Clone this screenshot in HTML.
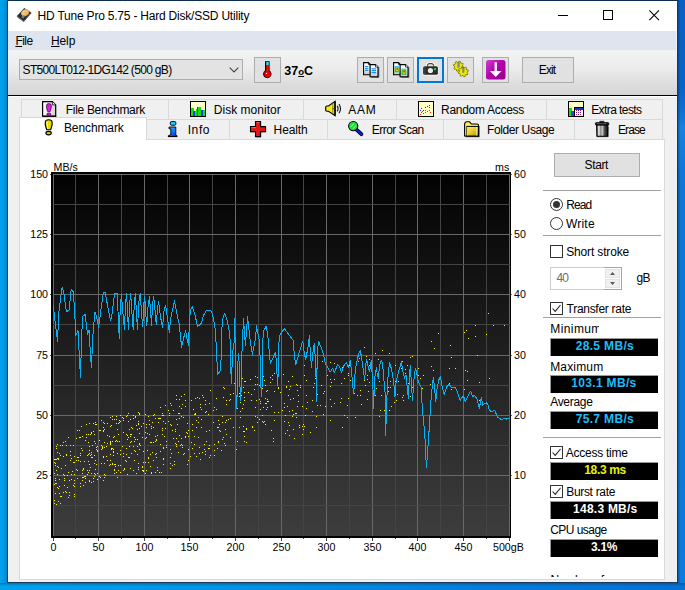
<!DOCTYPE html>
<html>
<head>
<meta charset="utf-8">
<title>HD Tune Pro 5.75 - Hard Disk/SSD Utility</title>
<style>
*{box-sizing:border-box;margin:0;padding:0}
html,body{width:685px;height:590px;overflow:hidden}
body{font-family:"Liberation Sans",sans-serif;font-size:12px;color:#000;position:relative;
 background:linear-gradient(90deg,#00a2ec 0px,#009ae6 4px,#0a80cc 7px,#0a78d0 340px,#0560c4 677px,#0468cd 685px);}
.abs{position:absolute}
.t{position:absolute;white-space:nowrap;line-height:12px;font-size:12px}
.ax{font-size:10.67px;line-height:11px;color:#000}
#win{position:absolute;left:7px;top:0;width:671px;height:583px;background:#f0f0f0;border:1px solid #1a3b5e;border-top-color:#0b2d52}
#title{position:absolute;left:8px;top:1px;width:669px;height:30px;background:#fff}
#menu{position:absolute;left:8px;top:31px;width:668px;height:19px;background:#dfe5ee}
#tool{position:absolute;left:8px;top:50px;width:669px;height:45px;background:linear-gradient(#f3f3f3,#ececec 40%,#d4d4d4)}
#toolline{position:absolute;left:8px;top:95px;width:669px;height:2px;background:#fff;border-top:1px solid #000}
.btn{position:absolute;top:57px;height:26px;width:27px;background:#e1e1e1;border:1px solid #adadad}
.tab{position:absolute;background:#f0f0f0;border-left:1px solid #d9d9d9;border-top:1px solid #d9d9d9}
#pane{position:absolute;left:19px;top:139px;width:646px;height:441px;background:#fff;border:1px solid #d9d9d9}
.val{position:absolute;left:550px;width:108px;height:18px;background:#000;border-left:1px solid #9a9a9a;border-top:1px solid #9a9a9a;color:#1ebcfa;font-weight:bold;text-align:center;font-size:12px;line-height:15px;white-space:nowrap}
.sep{position:absolute;left:543px;width:118px;height:1px;background:#a0a0a0}
.cb{position:absolute;left:550px;width:13px;height:13px;border:1px solid #333;background:#fff}
.rd{position:absolute;left:550px;width:13px;height:13px;border:1px solid #333;background:#fff;border-radius:50%}
.ic{position:absolute;width:16px;height:16px;overflow:visible}
</style>
</head>
<body>
<div id="win"></div>
<div id="title"></div>
<div id="menu"></div>
<div id="tool"></div>
<div id="toolline"></div>

<!-- title icon -->
<svg class="ic" style="left:16px;top:7px" viewBox="0 0 16 16"><defs><radialGradient id="dg" cx="0.45" cy="0.45" r="0.6"><stop offset="0" stop-color="#fde8b0"/><stop offset="0.55" stop-color="#f4bc60"/><stop offset="1" stop-color="#e09030"/></radialGradient></defs><path d="M0.900 9.100 L8.300 0.900 L15.200 5.400 L7.700 14.200 Z" fill="#2e2e30"/><path d="M0.900 9.100 L7.700 14.200 L7.700 15.100 L0.900 10Z" fill="#4a4a4a"/><path d="M7.700 14.200 L15.200 5.400 L15.200 6.300 L7.700 15.100Z" fill="#151515"/><ellipse cx="9.100" cy="5.700" rx="4.200" ry="3.300" fill="url(#dg)" transform="rotate(-33 9.100 5.700)"/><ellipse cx="9.100" cy="5.700" rx="1.350" ry="1.100" fill="#b8bcc8" transform="rotate(-33 9.100 5.700)"/><path d="M5.300 10.300 L7.800 7.800 L8.900 8.700 L7.200 11.800Z" fill="#8c8c90" opacity="0.850"/></svg>
<div class="t" id="ttl" style="left:37.6px;top:10px;letter-spacing:-0.21px">HD Tune Pro 5.75 - Hard Disk/SSD Utility</div>
<!-- caption buttons -->
<svg class="abs" style="left:550px;top:1px" width="127" height="30" viewBox="0 0 127 30" shape-rendering="crispEdges"><rect x="8" y="14" width="10" height="1" fill="#000"/><rect x="53.5" y="9.5" width="9" height="9" fill="none" stroke="#000" stroke-width="1"/><g shape-rendering="auto"><path d="M99.300 9.400 L109 19.100 M109 9.400 L99.300 19.100" stroke="#000" stroke-width="1.050" fill="none"/></g></svg>
<!-- menu -->
<div class="t" id="mfile" style="left:15.4px;top:35px;letter-spacing:-0.54px"><u>F</u>ile</div>
<div class="t" id="mhelp" style="left:51.0px;top:35px;letter-spacing:-0.13px"><u>H</u>elp</div>

<!-- toolbar -->
<div class="abs" id="combo" style="left:19px;top:59px;width:224px;height:21px;background:#e3e3e3;border:1px solid #adadad"></div>
<div class="t" id="combotx" style="left:22.6px;top:64px;letter-spacing:-0.68px">ST500LT012-1DG142 (500 gB)</div>
<svg class="abs" style="left:229px;top:67px" width="10" height="6" viewBox="0 0 10 6"><path d="M0.7 0.7 L5 5 L9.3 0.7" fill="none" stroke="#444" stroke-width="1.1"/></svg>
<div class="btn" style="left:254px"></div>
<svg class="abs" style="left:261px;top:60px" width="13" height="19" viewBox="0 0 13 19"><path d="M4 1.200 h4.600 v9.300 a4.200 4.200 0 1 1 -4.600 0z" fill="#000"/><rect x="5.200" y="2" width="2.600" height="3.500" fill="#30d8e8"/><rect x="5.200" y="5.500" width="2.600" height="7" fill="#f01010"/><circle cx="6.500" cy="14" r="3.300" fill="#e80000"/><rect x="4.800" y="12.800" width="1.200" height="1.200" fill="#fff"/></svg>
<div class="t" id="temp" style="left:284.2px;top:65px;font-weight:bold;font-size:12.5px;letter-spacing:0.06px">37<span style="font-size:9.5px;text-decoration:underline">o</span>C</div>

<div class="btn" style="left:357px"></div>
<svg class="abs" style="left:362px;top:61px" width="18" height="17" viewBox="0 0 18 17"><defs><linearGradient id="pp" x1="0" y1="0" x2="0" y2="1"><stop offset="0.400" stop-color="#fff"/><stop offset="1" stop-color="#c4c4c4"/></linearGradient></defs><path d="M1.600 1.600 h4.800 l2 2 v10.200 h-6.800z" fill="url(#pp)" stroke="#000" stroke-width="1.100"/><path d="M6.400 1.600 v2 h2" fill="none" stroke="#000" stroke-width="0.700"/><path d="M9 16.300 h7.800 v-10" fill="none" stroke="#000" stroke-width="1" opacity="0.550"/><path d="M8.100 3.600 h5.400 l2.500 2.500 v9.600 h-7.900z" fill="url(#pp)" stroke="#000" stroke-width="1.100"/><path d="M13.500 3.600 v2.500 h2.500" fill="#fff" stroke="#000" stroke-width="0.700"/><path d="M3 5.600h3.400M3 7.600h3.400M3 9.500h3.400M9.600 7.800h4.600M9.600 9.600h4.600M9.600 11.600h4.600" stroke="#1a8cff" stroke-width="1.200"/></svg>
<div class="btn" style="left:387px"></div>
<svg class="abs" style="left:392px;top:61px" width="18" height="17" viewBox="0 0 18 17"><path d="M1.600 1.600 h4.800 l2 2 v10.200 h-6.800z" fill="url(#pp)" stroke="#000" stroke-width="1.100"/><path d="M6.400 1.600 v2 h2" fill="none" stroke="#000" stroke-width="0.700"/><path d="M9 16.300 h7.800 v-10" fill="none" stroke="#000" stroke-width="1" opacity="0.550"/><path d="M8.100 3.600 h5.400 l2.500 2.500 v9.600 h-7.900z" fill="url(#pp)" stroke="#000" stroke-width="1.100"/><path d="M13.500 3.600 v2.500 h2.500" fill="#fff" stroke="#000" stroke-width="0.700"/><rect x="2.600" y="5" width="5" height="1.300" fill="#30c8f0"/><rect x="2.600" y="6.300" width="5" height="5" fill="#38c038"/><rect x="4" y="7" width="2.400" height="3" fill="#e8d020"/><rect x="4.600" y="7.200" width="1.500" height="1.500" fill="#e02020"/><rect x="9.400" y="7.600" width="5" height="1.300" fill="#30c8f0"/><rect x="9.400" y="8.900" width="5" height="5" fill="#38c038"/><rect x="10.800" y="9.600" width="2.400" height="3" fill="#e8d020"/><rect x="11.400" y="9.800" width="1.500" height="1.500" fill="#e02020"/></svg>
<div class="btn" style="left:417px;border:2px solid #0078d7"></div>
<svg class="abs" style="left:422px;top:62px" width="17" height="14" viewBox="0 0 17 14"><rect x="0.600" y="3.700" width="15.800" height="9.800" rx="2" fill="#fff"/><path d="M5.400 4.500 v-1 q0 -1.800 1.600 -1.800 h3 q1.600 0 1.600 1.800 v1" fill="#e8e8e8" stroke="#fff" stroke-width="2.600"/><path d="M5.400 4.500 v-1 q0 -1.800 1.600 -1.800 h3 q1.600 0 1.600 1.800 v1" fill="#e4e4e4" stroke="#222" stroke-width="1"/><rect x="1.200" y="4.200" width="14.700" height="8.600" rx="1.500" fill="#2b2b2b"/><rect x="1.200" y="5" width="3" height="7" rx="1" fill="#3c3c3c"/><circle cx="8.400" cy="8.500" r="2.600" fill="#ececec"/><rect x="11.900" y="6.100" width="2.100" height="2.100" fill="#18d838"/></svg>
<div class="btn" style="left:447px"></div>
<svg class="abs" style="left:452px;top:60px" width="18" height="18" viewBox="0 0 18 18"><g fill="#ecec08" stroke="#7c7c00" stroke-width="0.900" stroke-linejoin="round"><path d="M10.40 6.20 L11.56 6.80 L11.21 8.15 L9.90 8.11 L9.26 8.96 L9.66 10.21 L8.45 10.91 L7.56 9.95 L6.50 10.10 L5.90 11.26 L4.55 10.91 L4.59 9.60 L3.74 8.96 L2.49 9.36 L1.79 8.15 L2.75 7.26 L2.60 6.20 L1.44 5.60 L1.79 4.25 L3.10 4.29 L3.74 3.44 L3.34 2.19 L4.55 1.49 L5.44 2.45 L6.50 2.30 L7.10 1.14 L8.45 1.49 L8.41 2.80 L9.26 3.44 L10.51 3.04 L11.21 4.25 L10.25 5.14Z"/><path d="M15.03 12.85 L15.96 13.77 L15.22 14.96 L13.99 14.53 L13.12 15.15 L13.13 16.46 L11.77 16.78 L11.20 15.60 L10.15 15.43 L9.23 16.36 L8.04 15.62 L8.47 14.39 L7.85 13.52 L6.54 13.53 L6.22 12.17 L7.40 11.60 L7.57 10.55 L6.64 9.63 L7.38 8.44 L8.61 8.87 L9.48 8.25 L9.47 6.94 L10.83 6.62 L11.40 7.80 L12.45 7.97 L13.37 7.04 L14.56 7.78 L14.13 9.01 L14.75 9.88 L16.06 9.87 L16.38 11.23 L15.20 11.80Z"/></g><rect x="5.800" y="2.400" width="1.500" height="4.800" fill="#8088a0" stroke="#50586a" stroke-width="0.300"/><rect x="10.600" y="7.800" width="1.500" height="4.800" fill="#8088a0" stroke="#50586a" stroke-width="0.300"/></svg>
<div class="btn" style="left:482px"></div>
<svg class="abs" style="left:486px;top:60px" width="20" height="20" viewBox="0 0 20 20"><defs><linearGradient id="pu" x1="0" y1="0" x2="1" y2="1"><stop offset="0" stop-color="#d040d0"/><stop offset="0.5" stop-color="#b000a8"/><stop offset="1" stop-color="#98008c"/></linearGradient></defs><rect x="0" y="0" width="19.500" height="19.500" rx="2.500" fill="url(#pu)"/><path d="M8.600 2.300 h2.300 v8.700 h4.700 l-5.850 6 l-5.850 -6 h4.700z" fill="#fff"/></svg>
<div class="btn" style="left:522px;width:52px"></div>
<div class="t" id="exit" style="left:538.8px;top:64px;font-size:12px;letter-spacing:-0.90px">Exit</div>

<!-- tabs: upper row -->
<div class="abs" style="left:21px;top:99px;width:642px;height:21px;background:#f0f0f0;border:1px solid #d9d9d9;border-bottom:none"></div>
<div class="abs" style="left:168px;top:100px;width:1px;height:19px;background:#d9d9d9"></div>
<div class="abs" style="left:303px;top:100px;width:1px;height:19px;background:#d9d9d9"></div>
<div class="abs" style="left:396px;top:100px;width:1px;height:19px;background:#d9d9d9"></div>
<div class="abs" style="left:546px;top:100px;width:1px;height:19px;background:#d9d9d9"></div>
<!-- lower row -->
<div class="abs" style="left:21px;top:119px;width:642px;height:21px;background:#f0f0f0;border:1px solid #d9d9d9;border-bottom:none"></div>
<div class="abs" style="left:229px;top:120px;width:1px;height:19px;background:#d9d9d9"></div>
<div class="abs" style="left:327px;top:120px;width:1px;height:19px;background:#d9d9d9"></div>
<div class="abs" style="left:443px;top:120px;width:1px;height:19px;background:#d9d9d9"></div>
<div class="abs" style="left:574px;top:120px;width:1px;height:19px;background:#d9d9d9"></div>
<div id="pane"></div>
<!-- selected tab -->
<div class="abs" style="left:19px;top:117px;width:128px;height:23px;background:#fff;border:1px solid #d9d9d9;border-bottom:none"></div>

<!-- tab icons -->
<!-- file benchmark -->
<svg class="ic" style="left:42px;top:101px" viewBox="0 0 16 16"><defs><linearGradient id="pgf" x1="0" y1="0" x2="1" y2="0"><stop offset="0" stop-color="#fff"/><stop offset="1" stop-color="#d0d0d0"/></linearGradient></defs><path d="M0.600 0.600 h9.800 l3.300 3.300 v11.200 h-13.100z" fill="url(#pgf)" stroke="#000" stroke-width="1.200"/><path d="M0.300 15.300 h13.900" stroke="#000" stroke-width="1"/><path d="M10.400 0.800 v3.100 h3.100" fill="#fff" stroke="#000" stroke-width="0.800"/><path d="M4.400 5 Q4.400 2.600 6.900 2.600 Q9.400 2.600 9.400 5 Q9.400 7.500 8.100 10.600 L5.700 10.600 Q4.400 7.500 4.400 5 Z" fill="#e818e8" stroke="#300030" stroke-width="0.700"/><ellipse cx="6.900" cy="13.200" rx="2" ry="1.200" fill="#e818e8" stroke="#300030" stroke-width="0.700"/></svg>
<div class="t" id="tfb" style="left:65.8px;top:104px;letter-spacing:-0.31px">File Benchmark</div>
<!-- disk monitor -->
<svg class="ic" style="left:190px;top:101px" viewBox="0 0 16 16" shape-rendering="crispEdges"><rect x="1" y="1" width="15" height="15" fill="#444"/><rect x="0.500" y="0.500" width="14.500" height="14.500" fill="#ffffc8" stroke="#000"/><rect x="1" y="7" width="3" height="8" fill="#10e010"/><rect x="4" y="10" width="2" height="5" fill="#10e010"/><rect x="6" y="8" width="2" height="7" fill="#10e010"/><rect x="8" y="6" width="3" height="9" fill="#10e010"/><rect x="11" y="9" width="4" height="6" fill="#10e010"/><rect x="3" y="10" width="1.500" height="5" fill="#3030ff"/><rect x="6.500" y="5.500" width="1.500" height="9.500" fill="#3030ff"/><rect x="11" y="9" width="1.500" height="6" fill="#3030ff"/></svg>
<div class="t" id="tdm" style="left:213.8px;top:104px;letter-spacing:0.02px">Disk monitor</div>
<!-- AAM -->
<svg class="ic" style="left:325px;top:101px" viewBox="0 0 16 16"><path d="M0.700 6.200 q0 -1.200 1.200 -1.200 h1.600 l6.600 -4.600 v14.400 l-6.600 -4.600 h-1.600 q-1.200 0 -1.200 -1.200z" fill="#f4ec18" stroke="#000" stroke-width="1.100"/><path d="M10 0.600 v14" stroke="#000" stroke-width="1.400"/><path d="M7.800 2.500 v10.500" stroke="#787000" stroke-width="0.800"/><circle cx="8.200" cy="7.600" r="0.900" fill="#666"/><path d="M12.200 4.800 q1.800 2.800 0 5.600 M14 3 q3 4.600 0 9.200" fill="none" stroke="#111" stroke-width="1.100"/></svg>
<div class="t" id="taam" style="left:348.2px;top:104px;letter-spacing:0.80px">AAM</div>
<!-- random access -->
<svg class="ic" style="left:418px;top:101px" viewBox="0 0 16 16" shape-rendering="crispEdges"><rect x="1" y="1" width="15" height="15" fill="#444"/><rect x="0.500" y="0.500" width="14.500" height="14.500" fill="#ffffc8" stroke="#000"/><g fill="#2020ff"><rect x="3" y="7" width="1" height="1"/><rect x="5" y="9" width="1" height="1"/><rect x="7" y="6" width="1" height="1"/><rect x="9" y="5" width="1" height="1"/><rect x="11" y="4" width="1" height="1"/><rect x="11" y="6" width="1" height="1"/><rect x="2" y="9" width="1" height="1"/></g><g fill="#ff2020"><rect x="2" y="13" width="1" height="1"/><rect x="3" y="11" width="1" height="1"/><rect x="5" y="12" width="1" height="1"/><rect x="7" y="11" width="1" height="1"/><rect x="7" y="9" width="1" height="1"/><rect x="9" y="10" width="1" height="1"/><rect x="11" y="9" width="1" height="1"/><rect x="12" y="11" width="1" height="1"/><rect x="4" y="10" width="1" height="1"/></g></svg>
<div class="t" id="tra" style="left:441.1px;top:104px;letter-spacing:-0.29px">Random Access</div>
<!-- extra tests -->
<svg class="ic" style="left:568px;top:101px" viewBox="0 0 16 16" shape-rendering="crispEdges"><rect x="1" y="1" width="15" height="15" fill="#444"/><rect x="0.500" y="0.500" width="14.500" height="14.500" fill="#ffffc8" stroke="#000"/><rect x="1" y="7" width="3" height="8" fill="#10e010"/><rect x="3" y="10" width="3" height="5" fill="#3838ff"/><rect x="6.500" y="6.500" width="8.500" height="8.500" fill="#fff" stroke="#000"/><rect x="7" y="7" width="8" height="1.500" fill="#2030d0"/><g fill="#f02020"><rect x="8" y="9" width="1" height="1"/><rect x="12" y="9" width="1" height="1"/><rect x="10" y="11" width="1" height="1"/><rect x="8" y="13" width="1" height="1"/><rect x="12" y="13" width="1" height="1"/></g><g fill="#2020f0"><rect x="10" y="9" width="1" height="1"/><rect x="8" y="11" width="1" height="1"/><rect x="12" y="11" width="1" height="1"/><rect x="10" y="13" width="1" height="1"/></g></svg>
<div class="t" id="tet" style="left:591.2px;top:104px;letter-spacing:-0.58px">Extra tests</div>
<!-- benchmark (selected) -->
<svg class="ic" style="left:41px;top:119px" viewBox="0 0 16 16"><path d="M4.300 3.400 Q4.300 0.700 7.700 0.700 Q11.100 0.700 11.100 3.400 L11.100 5.600 Q10.500 8.600 9.600 10.700 L5.800 10.700 Q4.900 8.600 4.300 5.600 Z" fill="#e4dc00" stroke="#000" stroke-width="1.150"/><path d="M6 2.500 Q5.900 5 6.800 9.500" stroke="#ffff90" stroke-width="1" fill="none"/><ellipse cx="7.600" cy="14.100" rx="2.700" ry="1.800" fill="#d4cc00" stroke="#000" stroke-width="1.150"/></svg>
<div class="t" id="tbm" style="left:63.9px;top:122px;letter-spacing:-0.09px">Benchmark</div>
<!-- info -->
<svg class="ic" style="left:165px;top:121px" viewBox="0 0 16 16"><defs><linearGradient id="bl" x1="0" y1="0" x2="0.300" y2="1"><stop offset="0" stop-color="#28b0ff"/><stop offset="1" stop-color="#0048f8"/></linearGradient></defs><rect x="5.300" y="0.500" width="5.600" height="3.800" rx="1.400" fill="#20c0ff" stroke="#000" stroke-width="0.900"/><path d="M4 6 L10.800 6 L10.800 14.600 L12 14.600 L12 15.500 L3.200 15.500 L3.200 14.800 L5.800 13.500 L5.800 7.800 L4 7.800 Z" fill="url(#bl)" stroke="#000" stroke-width="0.900"/><path d="M3 15.600 h9.300" stroke="#000" stroke-width="1"/></svg>
<div class="t" id="tin" style="left:187.7px;top:124px;letter-spacing:0.60px">Info</div>
<!-- health -->
<svg class="ic" style="left:250px;top:121px" viewBox="0 0 16 16"><path d="M6.200 1.200 h5 v5 h5 v5 h-5 v5 h-5 v-5 h-5 v-5 h5z" fill="#000" opacity="0.550"/><path d="M5.500 0.600 h5 v5 h5 v5 h-5 v5 h-5 v-5 h-5 v-5 h5z" fill="#e41818" stroke="#000" stroke-width="1.100"/><path d="M6.500 1.600 h3 M1.500 6.600 h4.500" stroke="#ff7070" stroke-width="0.900"/></svg>
<div class="t" id="the" style="left:273.6px;top:124px;letter-spacing:-0.12px">Health</div>
<!-- error scan -->
<svg class="ic" style="left:347px;top:121px" viewBox="0 0 17 17"><path d="M9.800 8.800 L15.300 14" stroke="#000" stroke-width="4" stroke-linecap="round"/><path d="M9.800 8.800 L15.300 14" stroke="#1420d0" stroke-width="2.300" stroke-linecap="round"/><circle cx="6.600" cy="5.400" r="4.900" fill="#28dc40" stroke="#000" stroke-width="1.100"/><path d="M4 6.200 L7.200 3.200 M6.600 8 L9 5.600" stroke="#d8ffd8" stroke-width="0.900"/></svg>
<div class="t" id="tes" style="left:371.8px;top:124px;letter-spacing:-0.54px">Error Scan</div>
<!-- folder usage -->
<svg class="ic" style="left:464px;top:121px" viewBox="0 0 16 16"><defs><linearGradient id="fo" x1="0" y1="0" x2="1" y2="1"><stop offset="0" stop-color="#fff080"/><stop offset="0.500" stop-color="#e8c828"/><stop offset="1" stop-color="#b88c00"/></linearGradient></defs><path d="M1.300 15.600 h13.800 v-10.500" stroke="#000" stroke-width="1.200" fill="none" opacity="0.600"/><path d="M0.600 3.600 q0 -2.800 2.200 -2.800 h2.700 l2 2.200 h5.600 q1.400 0 1.400 1.400 v10.600 h-13.900z" fill="#fcf060" stroke="#000" stroke-width="1.100"/><rect x="2.900" y="5.400" width="11.600" height="9.600" fill="url(#fo)" stroke="#000" stroke-width="1"/><path d="M12.400 6 v8.500" stroke="#fff4b0" stroke-width="0.700"/><path d="M3.500 6 v8.500" stroke="#fffbd0" stroke-width="0.700"/></svg>
<div class="t" id="tfu" style="left:487.0px;top:124px;letter-spacing:-0.39px">Folder Usage</div>
<!-- erase -->
<svg class="ic" style="left:594px;top:121px" viewBox="0 0 16 16"><defs><linearGradient id="tr" x1="0" y1="0" x2="1" y2="0"><stop offset="0" stop-color="#303030"/><stop offset="0.200" stop-color="#f0f0f0"/><stop offset="0.380" stop-color="#808080"/><stop offset="0.500" stop-color="#d0d0d0"/><stop offset="0.700" stop-color="#505050"/><stop offset="1" stop-color="#0a0a0a"/></linearGradient></defs><path d="M2.600 3.600 h11.200 l-0.300 11.700 h-10.600z" fill="url(#tr)" stroke="#000" stroke-width="1.100"/><path d="M3 15.700 h11.300 v-10" stroke="#000" stroke-width="0.900" fill="none" opacity="0.600"/><rect x="1.400" y="1.600" width="13.400" height="2.500" rx="0.900" fill="#1c1c1c" stroke="#000" stroke-width="0.800"/><path d="M3 2.300 h9" stroke="#8a8a8a" stroke-width="0.700"/><rect x="5.600" y="0.300" width="4.600" height="1.500" rx="0.500" fill="#222" stroke="#000" stroke-width="0.600"/></svg>
<div class="t" id="ter" style="left:618.0px;top:124px;letter-spacing:-0.90px">Erase</div>


<svg class="abs" style="left:0;top:0" width="685" height="590" viewBox="0 0 685 590" shape-rendering="crispEdges">
<defs><linearGradient id="pg" x1="0" y1="0" x2="0" y2="1"><stop offset="0" stop-color="#020202"/><stop offset="1" stop-color="#3d3d3d"/></linearGradient></defs>
<rect x="51" y="172" width="460" height="366" fill="#000"/>
<rect x="53" y="174" width="457" height="362" fill="url(#pg)"/>
<rect x="53" y="174" width="1" height="362" fill="#686868"/>
<rect x="75" y="174" width="1" height="362" fill="#444444"/>
<rect x="98" y="174" width="1" height="362" fill="#686868"/>
<rect x="121" y="174" width="1" height="362" fill="#444444"/>
<rect x="144" y="174" width="1" height="362" fill="#686868"/>
<rect x="167" y="174" width="1" height="362" fill="#444444"/>
<rect x="189" y="174" width="1" height="362" fill="#686868"/>
<rect x="212" y="174" width="1" height="362" fill="#444444"/>
<rect x="235" y="174" width="1" height="362" fill="#686868"/>
<rect x="258" y="174" width="1" height="362" fill="#444444"/>
<rect x="281" y="174" width="1" height="362" fill="#686868"/>
<rect x="303" y="174" width="1" height="362" fill="#444444"/>
<rect x="326" y="174" width="1" height="362" fill="#686868"/>
<rect x="349" y="174" width="1" height="362" fill="#444444"/>
<rect x="372" y="174" width="1" height="362" fill="#686868"/>
<rect x="395" y="174" width="1" height="362" fill="#444444"/>
<rect x="417" y="174" width="1" height="362" fill="#686868"/>
<rect x="440" y="174" width="1" height="362" fill="#444444"/>
<rect x="463" y="174" width="1" height="362" fill="#686868"/>
<rect x="486" y="174" width="1" height="362" fill="#444444"/>
<rect x="509" y="174" width="1" height="362" fill="#686868"/>
<rect x="53" y="174" width="457" height="1" fill="#686868"/>
<rect x="53" y="204" width="457" height="1" fill="#444444"/>
<rect x="53" y="234" width="457" height="1" fill="#686868"/>
<rect x="53" y="264" width="457" height="1" fill="#444444"/>
<rect x="53" y="294" width="457" height="1" fill="#686868"/>
<rect x="53" y="324" width="457" height="1" fill="#444444"/>
<rect x="53" y="355" width="457" height="1" fill="#686868"/>
<rect x="53" y="385" width="457" height="1" fill="#444444"/>
<rect x="53" y="415" width="457" height="1" fill="#686868"/>
<rect x="53" y="445" width="457" height="1" fill="#444444"/>
<rect x="53" y="475" width="457" height="1" fill="#686868"/>
<rect x="53" y="505" width="457" height="1" fill="#444444"/>

<rect x="50" y="174" width="1" height="1" fill="#555"/>
<rect x="511" y="174" width="1" height="1" fill="#666"/>
<rect x="50" y="234" width="1" height="1" fill="#555"/>
<rect x="511" y="234" width="1" height="1" fill="#666"/>
<rect x="50" y="294" width="1" height="1" fill="#555"/>
<rect x="511" y="294" width="1" height="1" fill="#666"/>
<rect x="50" y="355" width="1" height="1" fill="#555"/>
<rect x="511" y="355" width="1" height="1" fill="#666"/>
<rect x="50" y="415" width="1" height="1" fill="#555"/>
<rect x="511" y="415" width="1" height="1" fill="#666"/>
<rect x="50" y="475" width="1" height="1" fill="#555"/>
<rect x="511" y="475" width="1" height="1" fill="#666"/>
<rect x="53" y="538" width="1" height="3" fill="#444"/>
<rect x="75" y="538" width="1" height="1" fill="#444"/>
<rect x="98" y="538" width="1" height="3" fill="#444"/>
<rect x="121" y="538" width="1" height="1" fill="#444"/>
<rect x="144" y="538" width="1" height="3" fill="#444"/>
<rect x="167" y="538" width="1" height="1" fill="#444"/>
<rect x="189" y="538" width="1" height="3" fill="#444"/>
<rect x="212" y="538" width="1" height="1" fill="#444"/>
<rect x="235" y="538" width="1" height="3" fill="#444"/>
<rect x="258" y="538" width="1" height="1" fill="#444"/>
<rect x="281" y="538" width="1" height="3" fill="#444"/>
<rect x="303" y="538" width="1" height="1" fill="#444"/>
<rect x="326" y="538" width="1" height="3" fill="#444"/>
<rect x="349" y="538" width="1" height="1" fill="#444"/>
<rect x="372" y="538" width="1" height="3" fill="#444"/>
<rect x="395" y="538" width="1" height="1" fill="#444"/>
<rect x="417" y="538" width="1" height="3" fill="#444"/>
<rect x="440" y="538" width="1" height="1" fill="#444"/>
<rect x="463" y="538" width="1" height="3" fill="#444"/>
<rect x="486" y="538" width="1" height="1" fill="#444"/>
<rect x="509" y="538" width="1" height="3" fill="#444"/>
<path d="M63 474h1v1h-1zM73 462h1v1h-1zM64 475h1v1h-1zM57 474h1v1h-1zM67 487h1v1h-1zM55 463h1v1h-1zM55 493h1v1h-1zM68 437h1v1h-1zM74 494h1v1h-1zM67 475h1v1h-1zM57 444h1v1h-1zM65 441h1v1h-1zM57 458h1v1h-1zM54 473h1v1h-1zM63 492h1v1h-1zM64 478h1v1h-1zM64 480h1v1h-1zM63 456h1v1h-1zM74 496h1v1h-1zM71 479h1v1h-1zM60 455h1v1h-1zM60 445h1v1h-1zM70 460h1v1h-1zM71 458h1v1h-1zM74 486h1v1h-1zM54 459h1v1h-1zM73 462h1v1h-1zM74 456h1v1h-1zM55 483h1v1h-1zM70 451h1v1h-1zM55 465h1v1h-1zM74 480h1v1h-1zM56 459h1v1h-1zM56 448h1v1h-1zM70 445h1v1h-1zM65 465h1v1h-1zM58 488h1v1h-1zM56 483h1v1h-1zM56 470h1v1h-1zM58 459h1v1h-1zM74 483h1v1h-1zM60 496h1v1h-1zM58 467h1v1h-1zM71 474h1v1h-1zM56 504h1v1h-1zM58 458h1v1h-1zM70 455h1v1h-1zM60 445h1v1h-1zM55 480h1v1h-1zM59 479h1v1h-1zM61 468h1v1h-1zM74 462h1v1h-1zM66 492h1v1h-1zM57 452h1v1h-1zM73 485h1v1h-1zM59 453h1v1h-1zM69 495h1v1h-1zM58 501h1v1h-1zM72 471h1v1h-1zM62 445h1v1h-1zM54 503h1v1h-1zM59 486h1v1h-1zM59 493h1v1h-1zM66 455h1v1h-1zM57 487h1v1h-1zM55 459h1v1h-1zM65 491h1v1h-1zM66 454h1v1h-1zM73 445h1v1h-1zM54 462h1v1h-1zM63 442h1v1h-1zM57 466h1v1h-1zM66 445h1v1h-1zM61 496h1v1h-1zM74 474h1v1h-1zM68 472h1v1h-1zM56 446h1v1h-1zM54 500h1v1h-1zM68 497h1v1h-1zM54 484h1v1h-1zM64 485h1v1h-1zM60 503h1v1h-1zM55 478h1v1h-1zM69 492h1v1h-1zM69 480h1v1h-1zM93 478h1v1h-1zM83 469h1v1h-1zM95 474h1v1h-1zM85 476h1v1h-1zM94 455h1v1h-1zM89 446h1v1h-1zM88 461h1v1h-1zM77 470h1v1h-1zM97 473h1v1h-1zM92 445h1v1h-1zM92 457h1v1h-1zM85 478h1v1h-1zM77 478h1v1h-1zM76 469h1v1h-1zM86 437h1v1h-1zM91 452h1v1h-1zM89 481h1v1h-1zM81 426h1v1h-1zM82 470h1v1h-1zM80 437h1v1h-1zM95 460h1v1h-1zM85 482h1v1h-1zM83 468h1v1h-1zM80 455h1v1h-1zM93 478h1v1h-1zM95 443h1v1h-1zM88 442h1v1h-1zM78 460h1v1h-1zM94 473h1v1h-1zM91 482h1v1h-1zM82 436h1v1h-1zM85 440h1v1h-1zM80 453h1v1h-1zM89 453h1v1h-1zM82 480h1v1h-1zM97 446h1v1h-1zM77 430h1v1h-1zM95 422h1v1h-1zM91 457h1v1h-1zM82 477h1v1h-1zM76 438h1v1h-1zM86 424h1v1h-1zM94 434h1v1h-1zM79 430h1v1h-1zM89 450h1v1h-1zM89 464h1v1h-1zM93 481h1v1h-1zM91 433h1v1h-1zM86 434h1v1h-1zM76 460h1v1h-1zM91 432h1v1h-1zM81 448h1v1h-1zM91 454h1v1h-1zM89 470h1v1h-1zM84 476h1v1h-1zM95 424h1v1h-1zM96 464h1v1h-1zM78 457h1v1h-1zM89 480h1v1h-1zM84 461h1v1h-1zM95 469h1v1h-1zM96 447h1v1h-1zM90 434h1v1h-1zM91 473h1v1h-1zM90 467h1v1h-1zM80 486h1v1h-1zM97 479h1v1h-1zM87 474h1v1h-1zM83 485h1v1h-1zM94 441h1v1h-1zM77 457h1v1h-1zM88 472h1v1h-1zM86 424h1v1h-1zM93 423h1v1h-1zM93 431h1v1h-1zM83 477h1v1h-1zM79 437h1v1h-1zM87 470h1v1h-1zM94 463h1v1h-1zM96 449h1v1h-1zM96 424h1v1h-1zM80 461h1v1h-1zM82 473h1v1h-1zM90 455h1v1h-1zM94 455h1v1h-1zM82 450h1v1h-1zM94 476h1v1h-1zM80 483h1v1h-1zM97 451h1v1h-1zM88 434h1v1h-1zM87 455h1v1h-1zM89 423h1v1h-1zM97 450h1v1h-1zM84 476h1v1h-1zM88 454h1v1h-1zM114 419h1v1h-1zM110 442h1v1h-1zM120 472h1v1h-1zM104 447h1v1h-1zM101 445h1v1h-1zM116 472h1v1h-1zM109 436h1v1h-1zM103 456h1v1h-1zM119 422h1v1h-1zM116 416h1v1h-1zM103 431h1v1h-1zM114 436h1v1h-1zM106 456h1v1h-1zM101 463h1v1h-1zM101 449h1v1h-1zM104 429h1v1h-1zM110 444h1v1h-1zM107 443h1v1h-1zM110 426h1v1h-1zM103 457h1v1h-1zM113 449h1v1h-1zM117 453h1v1h-1zM117 429h1v1h-1zM115 466h1v1h-1zM118 434h1v1h-1zM105 475h1v1h-1zM103 480h1v1h-1zM118 423h1v1h-1zM104 463h1v1h-1zM104 423h1v1h-1zM117 441h1v1h-1zM116 423h1v1h-1zM107 460h1v1h-1zM99 430h1v1h-1zM114 473h1v1h-1zM120 421h1v1h-1zM110 464h1v1h-1zM110 460h1v1h-1zM103 422h1v1h-1zM101 420h1v1h-1zM111 449h1v1h-1zM111 425h1v1h-1zM103 430h1v1h-1zM117 477h1v1h-1zM119 420h1v1h-1zM100 477h1v1h-1zM109 465h1v1h-1zM106 446h1v1h-1zM110 443h1v1h-1zM112 416h1v1h-1zM114 469h1v1h-1zM102 446h1v1h-1zM115 441h1v1h-1zM103 427h1v1h-1zM110 417h1v1h-1zM118 465h1v1h-1zM114 470h1v1h-1zM112 441h1v1h-1zM112 448h1v1h-1zM120 465h1v1h-1zM104 474h1v1h-1zM115 464h1v1h-1zM116 440h1v1h-1zM118 470h1v1h-1zM114 464h1v1h-1zM115 441h1v1h-1zM114 419h1v1h-1zM106 446h1v1h-1zM99 440h1v1h-1zM113 455h1v1h-1zM104 477h1v1h-1zM113 437h1v1h-1zM113 452h1v1h-1zM110 441h1v1h-1zM120 454h1v1h-1zM114 464h1v1h-1zM120 415h1v1h-1zM112 463h1v1h-1zM104 442h1v1h-1zM100 430h1v1h-1zM107 423h1v1h-1zM104 474h1v1h-1zM111 448h1v1h-1zM120 450h1v1h-1zM120 454h1v1h-1zM116 419h1v1h-1zM112 464h1v1h-1zM99 476h1v1h-1zM102 447h1v1h-1zM102 448h1v1h-1zM112 419h1v1h-1zM119 441h1v1h-1zM110 454h1v1h-1zM107 435h1v1h-1zM113 451h1v1h-1zM128 457h1v1h-1zM128 413h1v1h-1zM127 415h1v1h-1zM125 460h1v1h-1zM130 468h1v1h-1zM138 412h1v1h-1zM143 470h1v1h-1zM123 470h1v1h-1zM131 441h1v1h-1zM143 423h1v1h-1zM133 470h1v1h-1zM137 439h1v1h-1zM143 462h1v1h-1zM135 417h1v1h-1zM135 439h1v1h-1zM126 416h1v1h-1zM133 418h1v1h-1zM131 453h1v1h-1zM132 428h1v1h-1zM134 437h1v1h-1zM139 443h1v1h-1zM143 471h1v1h-1zM138 424h1v1h-1zM124 469h1v1h-1zM139 449h1v1h-1zM129 429h1v1h-1zM137 446h1v1h-1zM135 451h1v1h-1zM138 421h1v1h-1zM127 474h1v1h-1zM142 466h1v1h-1zM122 417h1v1h-1zM127 439h1v1h-1zM135 416h1v1h-1zM133 415h1v1h-1zM123 456h1v1h-1zM134 450h1v1h-1zM130 442h1v1h-1zM126 434h1v1h-1zM138 463h1v1h-1zM123 420h1v1h-1zM139 449h1v1h-1zM138 423h1v1h-1zM131 427h1v1h-1zM139 433h1v1h-1zM136 473h1v1h-1zM129 446h1v1h-1zM138 469h1v1h-1zM131 434h1v1h-1zM124 468h1v1h-1zM123 418h1v1h-1zM134 441h1v1h-1zM137 429h1v1h-1zM139 414h1v1h-1zM126 454h1v1h-1zM123 432h1v1h-1zM137 454h1v1h-1zM128 421h1v1h-1zM129 457h1v1h-1zM130 419h1v1h-1zM137 446h1v1h-1zM142 470h1v1h-1zM142 437h1v1h-1zM139 428h1v1h-1zM128 437h1v1h-1zM142 467h1v1h-1zM127 435h1v1h-1zM130 434h1v1h-1zM130 436h1v1h-1zM126 448h1v1h-1zM139 444h1v1h-1zM140 445h1v1h-1zM125 460h1v1h-1zM141 426h1v1h-1zM122 446h1v1h-1zM133 446h1v1h-1zM143 451h1v1h-1zM139 413h1v1h-1zM134 460h1v1h-1zM123 418h1v1h-1zM138 467h1v1h-1zM123 453h1v1h-1zM125 460h1v1h-1zM136 425h1v1h-1zM126 461h1v1h-1zM156 457h1v1h-1zM153 427h1v1h-1zM166 447h1v1h-1zM155 441h1v1h-1zM160 451h1v1h-1zM165 428h1v1h-1zM163 448h1v1h-1zM163 458h1v1h-1zM163 464h1v1h-1zM166 445h1v1h-1zM156 453h1v1h-1zM162 430h1v1h-1zM154 414h1v1h-1zM161 472h1v1h-1zM153 415h1v1h-1zM149 434h1v1h-1zM151 472h1v1h-1zM146 427h1v1h-1zM147 450h1v1h-1zM162 413h1v1h-1zM146 437h1v1h-1zM157 467h1v1h-1zM145 414h1v1h-1zM149 420h1v1h-1zM150 454h1v1h-1zM158 418h1v1h-1zM149 424h1v1h-1zM148 457h1v1h-1zM151 442h1v1h-1zM162 434h1v1h-1zM150 466h1v1h-1zM165 423h1v1h-1zM157 470h1v1h-1zM155 418h1v1h-1zM146 470h1v1h-1zM162 428h1v1h-1zM156 439h1v1h-1zM151 473h1v1h-1zM159 418h1v1h-1zM145 438h1v1h-1zM153 460h1v1h-1zM160 444h1v1h-1zM148 416h1v1h-1zM152 422h1v1h-1zM164 436h1v1h-1zM159 472h1v1h-1zM150 442h1v1h-1zM148 458h1v1h-1zM145 462h1v1h-1zM163 459h1v1h-1zM146 424h1v1h-1zM160 407h1v1h-1zM155 436h1v1h-1zM166 441h1v1h-1zM163 421h1v1h-1zM162 430h1v1h-1zM165 405h1v1h-1zM163 415h1v1h-1zM156 440h1v1h-1zM148 462h1v1h-1zM151 426h1v1h-1zM146 427h1v1h-1zM155 454h1v1h-1zM152 452h1v1h-1zM147 433h1v1h-1zM155 472h1v1h-1zM163 447h1v1h-1zM145 432h1v1h-1zM160 418h1v1h-1zM157 435h1v1h-1zM145 473h1v1h-1zM162 415h1v1h-1zM158 422h1v1h-1zM153 442h1v1h-1zM151 428h1v1h-1zM176 444h1v1h-1zM173 410h1v1h-1zM183 417h1v1h-1zM187 433h1v1h-1zM183 417h1v1h-1zM185 400h1v1h-1zM170 403h1v1h-1zM182 445h1v1h-1zM171 425h1v1h-1zM185 436h1v1h-1zM169 413h1v1h-1zM171 405h1v1h-1zM176 399h1v1h-1zM187 423h1v1h-1zM178 441h1v1h-1zM184 453h1v1h-1zM176 419h1v1h-1zM176 395h1v1h-1zM176 446h1v1h-1zM188 449h1v1h-1zM181 438h1v1h-1zM168 421h1v1h-1zM175 443h1v1h-1zM170 424h1v1h-1zM178 452h1v1h-1zM185 437h1v1h-1zM171 453h1v1h-1zM186 432h1v1h-1zM175 431h1v1h-1zM170 449h1v1h-1zM188 430h1v1h-1zM183 454h1v1h-1zM172 465h1v1h-1zM181 408h1v1h-1zM169 415h1v1h-1zM180 445h1v1h-1zM174 464h1v1h-1zM175 429h1v1h-1zM170 468h1v1h-1zM170 463h1v1h-1zM179 435h1v1h-1zM179 413h1v1h-1zM187 464h1v1h-1zM185 436h1v1h-1zM170 457h1v1h-1zM174 461h1v1h-1zM173 438h1v1h-1zM185 406h1v1h-1zM179 399h1v1h-1zM168 410h1v1h-1zM188 460h1v1h-1zM181 416h1v1h-1zM182 447h1v1h-1zM176 438h1v1h-1zM184 394h1v1h-1zM172 430h1v1h-1zM171 425h1v1h-1zM179 406h1v1h-1zM178 413h1v1h-1zM179 418h1v1h-1zM181 396h1v1h-1zM182 404h1v1h-1zM188 436h1v1h-1zM177 424h1v1h-1zM181 444h1v1h-1zM206 441h1v1h-1zM200 459h1v1h-1zM208 448h1v1h-1zM198 422h1v1h-1zM202 452h1v1h-1zM201 427h1v1h-1zM199 453h1v1h-1zM197 397h1v1h-1zM205 451h1v1h-1zM206 431h1v1h-1zM206 411h1v1h-1zM203 397h1v1h-1zM192 424h1v1h-1zM201 419h1v1h-1zM191 442h1v1h-1zM201 409h1v1h-1zM196 420h1v1h-1zM195 398h1v1h-1zM210 455h1v1h-1zM204 449h1v1h-1zM199 447h1v1h-1zM194 444h1v1h-1zM202 452h1v1h-1zM192 448h1v1h-1zM192 430h1v1h-1zM210 390h1v1h-1zM195 413h1v1h-1zM197 397h1v1h-1zM209 445h1v1h-1zM198 417h1v1h-1zM202 395h1v1h-1zM190 456h1v1h-1zM196 427h1v1h-1zM210 455h1v1h-1zM200 407h1v1h-1zM196 456h1v1h-1zM209 403h1v1h-1zM208 414h1v1h-1zM200 404h1v1h-1zM209 457h1v1h-1zM194 436h1v1h-1zM194 453h1v1h-1zM191 400h1v1h-1zM205 412h1v1h-1zM209 448h1v1h-1zM205 400h1v1h-1zM205 454h1v1h-1zM199 398h1v1h-1zM194 414h1v1h-1zM205 404h1v1h-1zM193 409h1v1h-1zM204 444h1v1h-1zM198 437h1v1h-1zM209 430h1v1h-1zM195 414h1v1h-1zM233 427h1v1h-1zM219 430h1v1h-1zM214 455h1v1h-1zM222 422h1v1h-1zM224 388h1v1h-1zM226 404h1v1h-1zM218 442h1v1h-1zM214 407h1v1h-1zM229 400h1v1h-1zM219 424h1v1h-1zM217 448h1v1h-1zM234 383h1v1h-1zM223 437h1v1h-1zM221 450h1v1h-1zM223 397h1v1h-1zM225 429h1v1h-1zM220 431h1v1h-1zM230 418h1v1h-1zM224 443h1v1h-1zM228 419h1v1h-1zM233 393h1v1h-1zM230 394h1v1h-1zM226 400h1v1h-1zM222 439h1v1h-1zM230 437h1v1h-1zM218 420h1v1h-1zM217 427h1v1h-1zM223 387h1v1h-1zM226 434h1v1h-1zM225 445h1v1h-1zM216 398h1v1h-1zM213 422h1v1h-1zM222 416h1v1h-1zM218 441h1v1h-1zM214 450h1v1h-1zM225 422h1v1h-1zM230 399h1v1h-1zM216 409h1v1h-1zM213 410h1v1h-1zM226 420h1v1h-1zM218 427h1v1h-1zM214 444h1v1h-1zM239 396h1v1h-1zM239 427h1v1h-1zM254 430h1v1h-1zM237 408h1v1h-1zM244 392h1v1h-1zM257 377h1v1h-1zM246 429h1v1h-1zM257 384h1v1h-1zM246 428h1v1h-1zM236 396h1v1h-1zM255 384h1v1h-1zM244 397h1v1h-1zM245 381h1v1h-1zM236 449h1v1h-1zM252 427h1v1h-1zM241 395h1v1h-1zM248 392h1v1h-1zM246 442h1v1h-1zM244 400h1v1h-1zM257 417h1v1h-1zM236 408h1v1h-1zM250 379h1v1h-1zM243 426h1v1h-1zM255 416h1v1h-1zM255 407h1v1h-1zM244 436h1v1h-1zM244 431h1v1h-1zM240 402h1v1h-1zM240 417h1v1h-1zM239 393h1v1h-1zM240 411h1v1h-1zM242 408h1v1h-1zM257 422h1v1h-1zM254 389h1v1h-1zM244 381h1v1h-1zM251 400h1v1h-1zM242 378h1v1h-1zM240 397h1v1h-1zM244 441h1v1h-1zM251 394h1v1h-1zM243 387h1v1h-1zM256 400h1v1h-1zM252 426h1v1h-1zM255 376h1v1h-1zM243 404h1v1h-1zM237 441h1v1h-1zM243 431h1v1h-1zM270 377h1v1h-1zM267 390h1v1h-1zM259 385h1v1h-1zM272 375h1v1h-1zM265 403h1v1h-1zM270 382h1v1h-1zM274 391h1v1h-1zM274 420h1v1h-1zM262 388h1v1h-1zM265 424h1v1h-1zM267 401h1v1h-1zM278 387h1v1h-1zM265 398h1v1h-1zM263 376h1v1h-1zM259 419h1v1h-1zM271 430h1v1h-1zM280 392h1v1h-1zM273 438h1v1h-1zM263 422h1v1h-1zM273 441h1v1h-1zM278 388h1v1h-1zM272 379h1v1h-1zM268 401h1v1h-1zM260 401h1v1h-1zM266 409h1v1h-1zM265 385h1v1h-1zM267 407h1v1h-1zM262 421h1v1h-1zM264 380h1v1h-1zM266 403h1v1h-1zM262 415h1v1h-1zM274 412h1v1h-1zM274 373h1v1h-1zM267 399h1v1h-1zM260 403h1v1h-1zM260 409h1v1h-1zM271 406h1v1h-1zM266 391h1v1h-1zM259 399h1v1h-1zM278 412h1v1h-1zM264 421h1v1h-1zM263 407h1v1h-1zM294 438h1v1h-1zM289 411h1v1h-1zM295 413h1v1h-1zM290 399h1v1h-1zM287 430h1v1h-1zM284 407h1v1h-1zM288 395h1v1h-1zM286 386h1v1h-1zM296 384h1v1h-1zM282 410h1v1h-1zM290 386h1v1h-1zM292 416h1v1h-1zM293 414h1v1h-1zM293 429h1v1h-1zM289 435h1v1h-1zM288 422h1v1h-1zM296 417h1v1h-1zM285 415h1v1h-1zM292 410h1v1h-1zM289 389h1v1h-1zM297 406h1v1h-1zM286 387h1v1h-1zM288 381h1v1h-1zM292 376h1v1h-1zM283 374h1v1h-1zM284 421h1v1h-1zM284 403h1v1h-1zM298 401h1v1h-1zM285 433h1v1h-1zM287 406h1v1h-1zM298 395h1v1h-1zM297 385h1v1h-1zM297 390h1v1h-1zM289 425h1v1h-1zM299 427h1v1h-1zM293 398h1v1h-1zM296 413h1v1h-1zM299 425h1v1h-1zM364 347h1v1h-1zM382 350h1v1h-1zM375 353h1v1h-1zM389 353h1v1h-1zM366 356h1v1h-1zM369 359h1v1h-1zM378 359h1v1h-1zM359 358h1v1h-1zM358 361h1v1h-1zM369 365h1v1h-1zM349 365h1v1h-1zM342 367h1v1h-1zM355 368h1v1h-1zM379 368h1v1h-1zM388 370h1v1h-1zM391 367h1v1h-1zM395 365h1v1h-1zM402 361h1v1h-1zM401 368h1v1h-1zM407 365h1v1h-1zM405 369h1v1h-1zM410 357h1v1h-1zM412 356h1v1h-1zM405 373h1v1h-1zM348 373h1v1h-1zM348 375h1v1h-1zM344 378h1v1h-1zM350 380h1v1h-1zM341 383h1v1h-1zM367 375h1v1h-1zM367 379h1v1h-1zM369 382h1v1h-1zM372 378h1v1h-1zM379 381h1v1h-1zM365 385h1v1h-1zM376 388h1v1h-1zM390 381h1v1h-1zM398 381h1v1h-1zM395 381h1v1h-1zM388 387h1v1h-1zM390 387h1v1h-1zM388 391h1v1h-1zM408 383h1v1h-1zM412 387h1v1h-1zM360 390h1v1h-1zM368 391h1v1h-1zM354 393h1v1h-1zM357 395h1v1h-1zM360 395h1v1h-1zM375 395h1v1h-1zM381 395h1v1h-1zM397 394h1v1h-1zM403 395h1v1h-1zM402 397h1v1h-1zM410 396h1v1h-1zM341 398h1v1h-1zM348 398h1v1h-1zM367 399h1v1h-1zM306 380h1v1h-1zM331 382h1v1h-1zM364 380h1v1h-1zM300 385h1v1h-1zM300 387h1v1h-1zM314 383h1v1h-1zM321 385h1v1h-1zM313 387h1v1h-1zM330 386h1v1h-1zM324 391h1v1h-1zM323 393h1v1h-1zM317 394h1v1h-1zM306 395h1v1h-1zM330 399h1v1h-1zM312 400h1v1h-1zM307 402h1v1h-1zM334 403h1v1h-1zM340 402h1v1h-1zM361 404h1v1h-1zM317 405h1v1h-1zM320 405h1v1h-1zM325 406h1v1h-1zM331 406h1v1h-1zM347 405h1v1h-1zM302 406h1v1h-1zM306 408h1v1h-1zM312 411h1v1h-1zM323 414h1v1h-1zM305 415h1v1h-1zM316 416h1v1h-1zM344 415h1v1h-1zM347 417h1v1h-1zM355 417h1v1h-1zM379 416h1v1h-1zM330 420h1v1h-1zM303 424h1v1h-1zM302 426h1v1h-1zM304 426h1v1h-1zM303 429h1v1h-1zM316 427h1v1h-1zM342 427h1v1h-1zM310 432h1v1h-1zM302 434h1v1h-1zM438 333h1v1h-1zM431 341h1v1h-1zM434 348h1v1h-1zM450 345h1v1h-1zM464 332h1v1h-1zM466 330h1v1h-1zM468 338h1v1h-1zM475 336h1v1h-1zM477 355h1v1h-1zM451 357h1v1h-1zM418 368h1v1h-1zM431 366h1v1h-1zM433 370h1v1h-1zM449 368h1v1h-1zM455 368h1v1h-1zM465 370h1v1h-1zM467 371h1v1h-1zM418 375h1v1h-1zM423 375h1v1h-1zM420 378h1v1h-1zM467 380h1v1h-1zM479 382h1v1h-1zM430 384h1v1h-1zM449 383h1v1h-1zM422 388h1v1h-1zM451 389h1v1h-1zM464 389h1v1h-1zM436 392h1v1h-1zM421 399h1v1h-1zM322 361h1v1h-1zM330 362h1v1h-1zM334 363h1v1h-1zM304 365h1v1h-1zM304 375h1v1h-1zM327 375h1v1h-1zM334 372h1v1h-1zM315 378h1v1h-1zM330 379h1v1h-1zM334 379h1v1h-1zM396 400h1v1h-1zM403 400h1v1h-1zM394 402h1v1h-1zM391 406h1v1h-1zM380 410h1v1h-1zM384 410h1v1h-1zM389 410h1v1h-1zM475 325h1v1h-1zM486 334h1v1h-1zM488 313h1v1h-1zM493 325h1v1h-1zM504 325h1v1h-1zM489 378h1v1h-1zM479 400h1v1h-1z" fill="#fcf400"/>
<g shape-rendering="crispEdges"><path d="M53.4 306.3 L54.7 318.0 L56.3 330.8 L57.6 341.9 L58.5 315.6 L60.5 298.6 L62.2 287.1 L63.9 293.6 L66.4 311.4 L69.0 310.5 L71.2 289.3 L73.4 292.2 L74.6 310.5 L75.8 335.9 L78.0 330.3 L79.7 363.0 L80.5 377.5 L81.4 344.4 L82.5 316.4 L85.1 314.7 L87.6 334.2 L89.0 330.0 L90.7 358.0 L91.5 367.6 L92.7 337.6 L94.9 312.2 L96.6 316.4 L98.6 327.5 L100.8 310.5 L103.4 292.2 L105.1 292.7 L110.5 320.3 L111.7 316.4 L114.7 293.2 L117.3 293.2 L118.5 324.0 L119.3 338.5 L120.2 308.8 L121.4 294.4 L122.7 310.5 L124.4 329.5 L125.6 303.7 L126.6 293.6 L127.8 319.0 L128.5 329.2 L129.5 305.4 L130.7 293.6 L132.0 313.9 L133.2 329.5 L134.2 305.4 L135.4 293.6 L136.6 315.6 L137.5 329.2 L138.8 302.0 L140.3 293.2 L141.7 315.6 L142.7 326.6 L143.9 303.7 L144.7 296.1 L145.9 315.6 L146.8 325.8 L148.1 305.4 L149.5 297.0 L150.7 313.9 L151.5 325.4 L152.5 305.4 L153.6 296.4 L154.9 308.8 L156.3 324.9 L157.5 308.8 L158.6 301.2 L160.3 315.6 L162.5 327.5 L164.2 308.8 L165.6 305.4 L167.6 319.0 L169.3 332.5 L170.6 318.7 L174.5 300.9 L176.3 310.4 L179.3 324.7 L181.6 347.2 L183.4 338.9 L185.6 330.3 L187.0 338.9 L188.5 345.4 L189.4 321.1 L190.6 309.8 L192.3 306.3 L194.7 314.0 L197.7 326.5 L201.2 323.5 L203.6 315.2 L206.0 311.0 L210.7 310.4 L212.5 314.0 L214.9 325.9 L216.4 347.2 L217.1 363.5 L217.8 374.2 L220.3 370.7 L221.1 358.4 L221.4 335.4 L222.6 318.7 L224.7 313.4 L227.3 321.1 L229.7 333.0 L230.5 347.3 L230.8 370.7 L231.7 383.5 L232.3 351.0 L233.8 349.5 L234.1 340.0 L234.5 319.0 L235.2 343.0 L235.7 380.0 L236.3 409.0 L237.2 394.0 L237.5 368.0 L238.5 354.0 L239.6 368.0 L240.3 400.6 L241.4 387.0 L241.6 361.0 L242.5 340.0 L243.5 319.0 L245.4 346.0 L247.5 317.0 L250.5 343.0 L252.4 354.6 L255.3 340.0 L256.5 326.0 L259.3 340.0 L260.0 355.0 L261.3 396.6 L262.6 379.5 L262.6 348.8 L263.3 331.4 L266.3 326.1 L268.0 338.0 L270.3 363.6 L275.4 352.5 L276.5 363.0 L277.2 377.2 L277.8 385.5 L278.4 360.6 L279.2 336.3 L284.3 328.6 L293.1 340.4 L294.1 352.3 L295.6 364.8 L302.7 341.0 L304.2 352.3 L305.7 360.0 L308.7 342.8 L309.4 335.4 L310.1 348.7 L311.5 367.1 L312.5 355.9 L314.3 343.4 L315.4 359.4 L316.3 385.5 L316.5 402.0 L317.2 356.5 L318.4 341.0 L320.8 346.4 L323.2 353.5 L325.5 364.2 L327.3 366.5 L330.0 372.2 L332.7 368.3 L334.4 372.5 L337.6 364.4 L339.7 366.8 L341.5 372.1 L343.9 365.6 L346.5 362.6 L348.3 368.0 L350.2 360.6 L351.6 371.5 L352.8 387.0 L353.8 393.5 L354.6 377.5 L356.4 363.2 L358.7 353.7 L360.3 350.4 L361.7 358.5 L363.5 371.5 L364.7 379.9 L365.6 365.6 L366.5 359.1 L368.8 369.2 L369.7 371.5 L371.2 360.6 L372.0 371.5 L373.0 389.3 L373.5 408.8 L374.8 377.5 L376.5 367.7 L377.1 373.3 L378.3 378.7 L379.5 365.6 L381.1 360.3 L382.5 362.6 L383.7 377.5 L385.4 396.5 L385.6 435.7 L387.2 389.3 L388.4 371.5 L389.6 362.0 L392.0 371.5 L393.8 383.4 L394.9 397.0 L396.1 382.2 L398.5 371.5 L401.5 362.0 L402.7 370.4 L404.4 378.1 L406.2 375.1 L407.6 391.7 L408.4 398.7 L409.5 373.9 L410.4 365.0 L411.2 379.9 L412.5 400.6 L413.9 379.9 L415.4 368.0 L416.9 373.9 L418.1 381.0 L421.0 387.0 L422.5 411.0 L424.7 432.5 L426.4 467.9 L428.3 442.6 L429.7 421.0 L430.7 403.7 L432.5 383.4 L433.5 377.5 L434.7 389.3 L435.7 402.0 L437.0 389.3 L438.8 379.9 L440.4 376.3 L442.4 388.2 L444.3 394.7 L446.5 387.0 L449.2 384.0 L450.7 387.0 L455.6 387.6 L457.6 392.4 L460.2 400.3 L463.3 395.4 L465.3 401.4 L470.6 391.2 L472.7 396.5 L474.5 395.4 L476.8 398.5 L479.3 408.2 L481.4 397.5 L482.7 405.1 L486.3 402.6 L487.8 404.6 L489.3 409.7 L490.9 411.3 L495.0 410.6 L496.5 414.9 L497.5 416.9 L501.1 419.5 L505.7 418.4 L506.7 419.1 L509.1 418.4" fill="none" stroke="#08b2f2" stroke-width="1" stroke-linejoin="round" stroke-linecap="round"/></g>
</svg>
<div class="t ax" style="right:637px;top:169px">150</div>
<div class="t ax" style="right:637px;top:229px">125</div>
<div class="t ax" style="right:637px;top:289px">100</div>
<div class="t ax" style="right:637px;top:350px">75</div>
<div class="t ax" style="right:637px;top:410px">50</div>
<div class="t ax" style="right:637px;top:470px">25</div>
<div class="t ax" style="left:514px;top:169px">60</div>
<div class="t ax" style="left:514px;top:229px">50</div>
<div class="t ax" style="left:514px;top:289px">40</div>
<div class="t ax" style="left:514px;top:350px">30</div>
<div class="t ax" style="left:514px;top:410px">20</div>
<div class="t ax" style="left:514px;top:470px">10</div>
<div class="t ax" style="left:33.5px;width:40px;text-align:center;top:542px">0</div>
<div class="t ax" style="left:78.5px;width:40px;text-align:center;top:542px">50</div>
<div class="t ax" style="left:124.5px;width:40px;text-align:center;top:542px">100</div>
<div class="t ax" style="left:169.5px;width:40px;text-align:center;top:542px">150</div>
<div class="t ax" style="left:215.5px;width:40px;text-align:center;top:542px">200</div>
<div class="t ax" style="left:261.5px;width:40px;text-align:center;top:542px">250</div>
<div class="t ax" style="left:306.5px;width:40px;text-align:center;top:542px">300</div>
<div class="t ax" style="left:352.5px;width:40px;text-align:center;top:542px">350</div>
<div class="t ax" style="left:397.5px;width:40px;text-align:center;top:542px">400</div>
<div class="t ax" style="left:443.5px;width:40px;text-align:center;top:542px">450</div>
<div class="t ax" style="left:493px;top:542px">500gB</div>
<div class="t ax" style="left:53.5px;top:162px">MB/s</div>
<div class="t ax" style="left:495px;top:162px">ms</div>


<!-- right panel -->
<div class="abs" style="left:554px;top:153px;width:86px;height:24px;background:#e1e1e1;border:1px solid #adadad"></div>
<div class="t" id="start" style="left:584.6px;top:159px;letter-spacing:-0.40px">Start</div>
<div class="sep" style="top:190px"></div>
<div class="rd" style="top:198px"></div><div class="abs" style="left:553px;top:201px;width:7px;height:7px;border-radius:50%;background:#333"></div>
<div class="t" id="rread" style="left:566.2px;top:199px;letter-spacing:-0.90px">Read</div>
<div class="rd" style="top:217px"></div>
<div class="t" id="rwrite" style="left:566.0px;top:218px;letter-spacing:0.20px">Write</div>
<div class="sep" style="top:235px"></div>
<div class="cb" style="top:245px"></div>
<div class="t" id="cshort" style="left:566.2px;top:246px;letter-spacing:-0.15px">Short stroke</div>
<div class="abs" style="left:550px;top:267px;width:72px;height:23px;background:#fff;border:1px solid #cdcdcd"></div>
<div class="abs" style="left:604px;top:267px;width:18px;height:23px;background:#fff;border:1px solid #a2a6b2;border-left:none"></div>
<div class="abs" style="left:605px;top:269px;width:15px;height:9px;background:#f0f0f0;border:1px solid #e2e2e2"></div>
<div class="abs" style="left:605px;top:279px;width:15px;height:9px;background:#f0f0f0;border:1px solid #e2e2e2"></div>
<svg class="abs" style="left:610px;top:272px" width="5" height="3" viewBox="0 0 5 3"><path d="M0 3 L2.500 0 L5 3z" fill="#585858"/></svg>
<svg class="abs" style="left:610px;top:282px" width="5" height="3" viewBox="0 0 5 3"><path d="M0 0 L2.500 3 L5 0z" fill="#585858"/></svg>
<div class="t" id="n40" style="left:556.6px;top:272px;color:#6d6d6d;letter-spacing:-0.90px">40</div>
<div class="t" id="gb" style="left:636.4px;top:272px;letter-spacing:-0.60px">gB</div>
<div class="cb" style="top:302px"></div><svg class="abs" style="left:552px;top:304px" width="9" height="9" viewBox="0 0 9 9"><path d="M0.600 4.500 L3.200 7.300 L8.500 1" fill="none" stroke="#222" stroke-width="1.100"/></svg>
<div class="t" id="ctr" style="left:566.6px;top:303px;letter-spacing:-0.29px">Transfer rate</div>
<div class="sep" style="top:317px"></div>
<div class="t" id="lmin" style="left:550.3px;top:323px;width:48.6px;overflow:hidden;letter-spacing:0.4px">Minimum</div>
<div class="val" style="top:338px"><span id="v1" style="position:relative;left:0.4px;letter-spacing:0.34px">28.5 MB/s</span></div>
<div class="t" id="lmax" style="left:550.2px;top:361px;letter-spacing:0.17px">Maximum</div>
<div class="val" style="top:375px"><span id="v2" style="position:relative;left:-0.6px;letter-spacing:0.33px">103.1 MB/s</span></div>
<div class="t" id="lavg" style="left:550.2px;top:396px;letter-spacing:-0.30px">Average</div>
<div class="val" style="top:411px"><span id="v3" style="position:relative;left:0.4px;letter-spacing:0.34px">75.7 MB/s</span></div>
<div class="sep" style="top:437px"></div>
<div class="cb" style="top:446px"></div><svg class="abs" style="left:552px;top:448px" width="9" height="9" viewBox="0 0 9 9"><path d="M0.600 4.500 L3.200 7.300 L8.500 1" fill="none" stroke="#222" stroke-width="1.100"/></svg>
<div class="t" id="cat" style="left:565.8px;top:447px;letter-spacing:-0.26px">Access time</div>
<div class="val" style="top:462px;color:#e8f000"><span id="v4" style="position:relative;left:0.6px;letter-spacing:-0.34px">18.3 ms</span></div>
<div class="cb" style="top:485px"></div><svg class="abs" style="left:552px;top:487px" width="9" height="9" viewBox="0 0 9 9"><path d="M0.600 4.500 L3.200 7.300 L8.500 1" fill="none" stroke="#222" stroke-width="1.100"/></svg>
<div class="t" id="cbr" style="left:566.2px;top:486px;letter-spacing:-0.31px">Burst rate</div>
<div class="val" style="top:501px;color:#fff"><span id="v5" style="position:relative;left:0.8px;letter-spacing:0.24px">148.3 MB/s</span></div>
<div class="t" id="lcpu" style="left:550.2px;top:524px;letter-spacing:-0.54px">CPU usage</div>
<div class="val" style="top:539px;color:#fff"><span id="v6" style="position:relative;left:-0.4px;letter-spacing:-0.27px">3.1%</span></div>
<div class="abs" style="left:550px;top:575px;width:59px;height:2px;overflow:hidden"><div class="t" id="lnum" style="left:0.500px;top:-1px;letter-spacing:-0.300px">Number of passes</div></div>

<!-- bottom desktop strip -->
<div class="abs" style="left:0;top:583px;width:685px;height:7px;background:linear-gradient(rgba(0,40,90,.40),rgba(0,40,90,0) 3px),linear-gradient(90deg,#00a2ec,#0094e2 35%,#0482da 65%,#0870d0)"></div>
<!-- right desktop strip -->
<div class="abs" style="left:678px;top:0;width:7px;height:583px;background:linear-gradient(90deg,rgba(0,30,80,.45),rgba(0,30,80,0) 2px),linear-gradient(#0860c4 0px,#0864c8 90px,#0c70d4 110px,#1482e2 128px,#0c78da 170px,#0a78d8 300px,#0a7cdc 590px)"></div>
</body>
</html>
